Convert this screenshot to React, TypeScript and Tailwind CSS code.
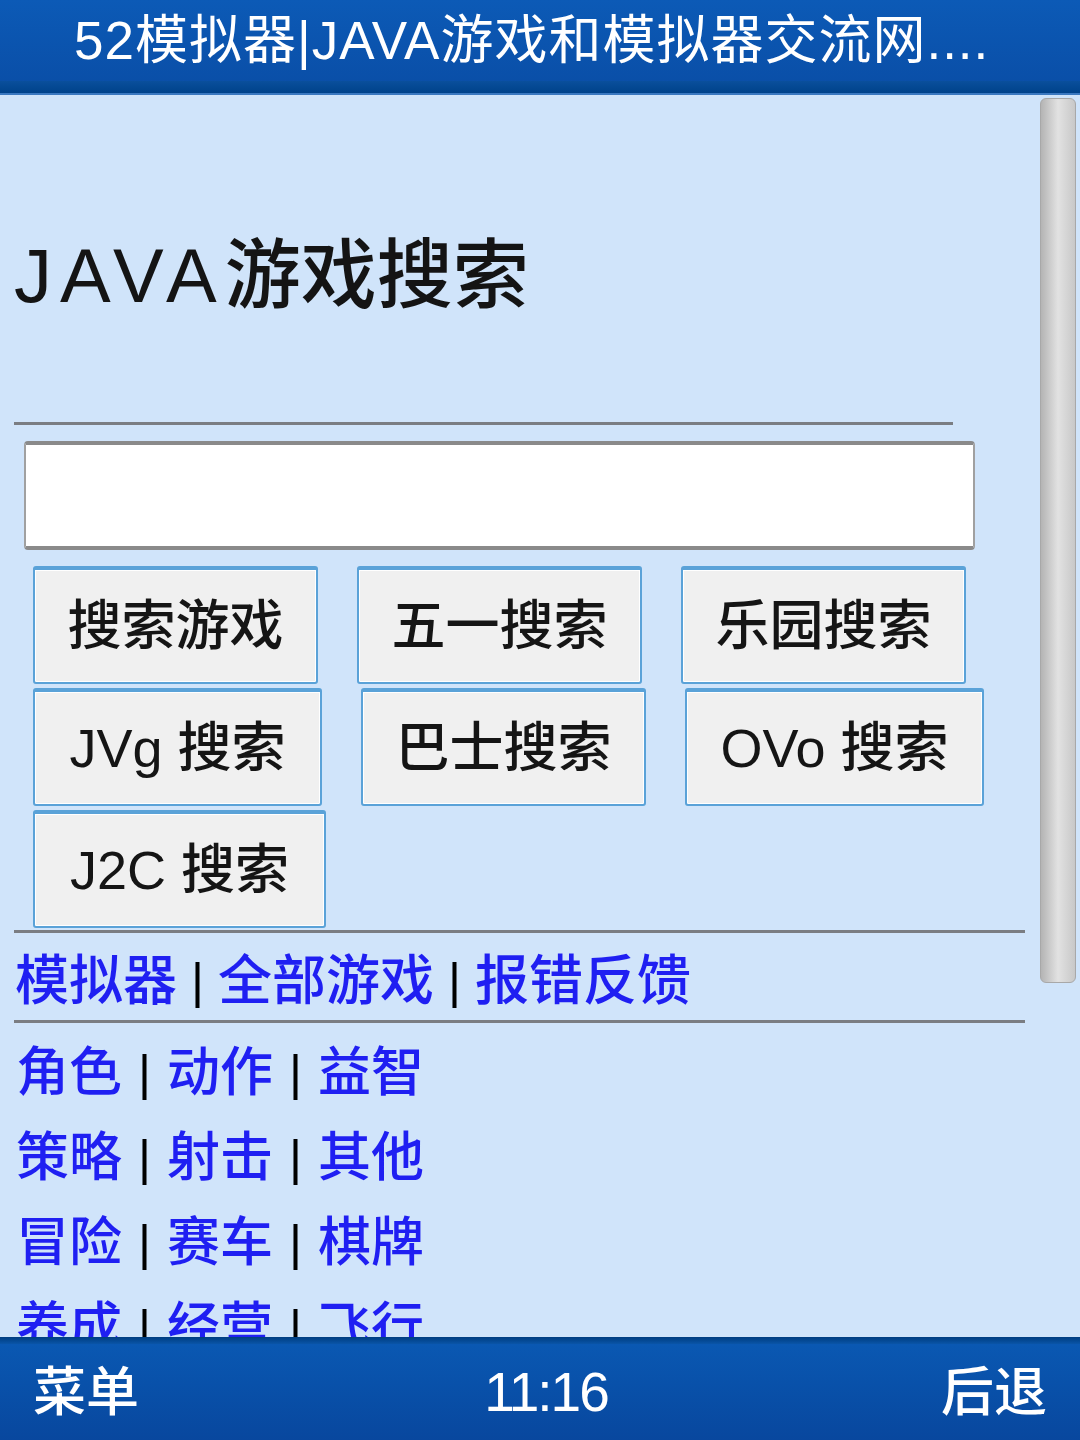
import React from "react";

const FONT = { fontFamily: '"Liberation Sans", "Noto Sans CJK SC", sans-serif' };

function Btn({ label, w }: { label: string; w: string }) {
  return (
    <div
      className={`${w} h-[118px] flex items-center justify-center bg-[#f0f0f0] border-2 border-[#5aa2d8] border-t-[4px] rounded-[3px] text-[54px] leading-none font-medium text-[#151515] shadow-[inset_0_0_0_1px_#ffffff]`}
    >
      {label}
    </div>
  );
}

function CatRow({ items }: { items: string[] }) {
  return (
    <div className="h-[85px] flex items-center text-[53px] leading-none font-medium pl-[2px]">
      {items.map((t, i) => (
        <React.Fragment key={t}>
          {i > 0 && <span className="text-black mx-[16px] text-[50px] font-normal">|</span>}
          <span className="text-[#1f1ff2]">{t}</span>
        </React.Fragment>
      ))}
    </div>
  );
}

export default function App() {
  return (
    <div className="w-[1080px] h-[1440px] flex flex-col overflow-hidden bg-[#d0e4fa]" style={FONT}>
      {/* top bar */}
      <div className="h-[95px] shrink-0 flex flex-col bg-[#0a52ad]">
        <div className="flex-1 flex items-center pl-[74px] bg-gradient-to-b from-[#0c5ab6] to-[#0a4fa8]">
          <span className="text-white text-[53px] leading-none tracking-[1px] whitespace-nowrap">
            52模拟器|JAVA游戏和模拟器交流网....
          </span>
        </div>
        <div className="h-[12px] bg-gradient-to-b from-[#0a4f9c] to-[#00428a]" />
        <div className="h-[2px] bg-[#3a78c0]" />
      </div>

      {/* content */}
      <div className="relative flex-1 overflow-hidden">
        <div className="absolute right-[4px] top-[3px] w-[36px] h-[885px] rounded-[6px] bg-gradient-to-r from-[#b4b4b4] via-[#e2e2e2] to-[#c8c8c8] border border-[#a8a8a8]" />

        <div className="w-[1030px] pl-[14px] flex flex-col">
          <div className="pt-[143px] text-[76px] leading-none font-medium text-[#141414] whitespace-nowrap">
            <span className="tracking-[8px]">JAVA</span>游戏搜索
          </div>
          <div className="mt-[108px] w-[939px] h-[3px] bg-[#7a7d82]" />
          <div className="mt-[16px] ml-[10px] w-[951px] h-[109px] bg-white border-x-2 border-y-[4px] border-x-[#a0a0a0] border-y-[#8a8a8a] rounded-[4px]" />
          <div className="mt-[16px] ml-[19px] flex flex-col gap-[4px]">
            <div className="flex gap-[39px]">
              <Btn label="搜索游戏" w="w-[285px]" />
              <Btn label="五一搜索" w="w-[285px]" />
              <Btn label="乐园搜索" w="w-[285px]" />
            </div>
            <div className="flex gap-[39px]">
              <Btn label="JVg 搜索" w="w-[289px]" />
              <Btn label="巴士搜索" w="w-[285px]" />
              <Btn label="OVo 搜索" w="w-[299px]" />
            </div>
            <div className="flex gap-[39px]">
              <Btn label="J2C 搜索" w="w-[293px]" />
            </div>
          </div>
          <div className="mt-[2px] w-[1011px] h-[3px] bg-[#7a7d82]" />
          <div className="h-[87px] pt-[8px] flex items-center text-[54px] leading-none font-medium pl-[1px]">
            <span className="text-[#1f1ff2]">模拟器</span>
            <span className="text-black mx-[14px] text-[50px] font-normal">|</span>
            <span className="text-[#1f1ff2]">全部游戏</span>
            <span className="text-black mx-[14px] text-[50px] font-normal">|</span>
            <span className="text-[#1f1ff2]">报错反馈</span>
          </div>
          <div className="w-[1011px] h-[3px] bg-[#7a7d82]" />
          <div className="pt-[7px] flex flex-col">
            <CatRow items={["角色", "动作", "益智"]} />
            <CatRow items={["策略", "射击", "其他"]} />
            <CatRow items={["冒险", "赛车", "棋牌"]} />
            <CatRow items={["养成", "经营", "飞行"]} />
          </div>
        </div>
      </div>

      {/* bottom bar */}
      <div className="h-[103px] shrink-0 flex flex-col">
        <div className="h-[7px] bg-gradient-to-b from-[#003d80] to-[#0a55a8]" />
        <div className="flex-1 flex items-center justify-between px-[33px] bg-gradient-to-b from-[#0a58b2] to-[#08479e] text-white text-[53px] leading-none font-medium">
          <span>菜单</span>
          <span className="text-[55px] tracking-[-2px] ml-[12px] font-normal">11:16</span>
          <span>后退</span>
        </div>
      </div>
    </div>
  );
}
